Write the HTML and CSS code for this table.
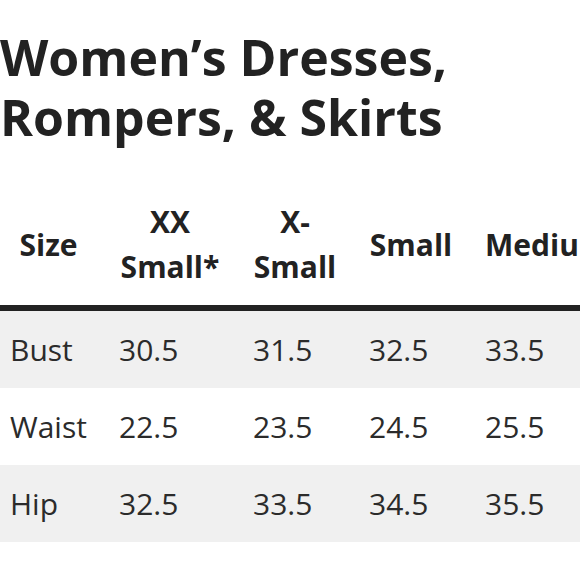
FILE: index.html
```html
<!DOCTYPE html>
<html lang="en">
<head>
<meta charset="utf-8">
<title>Women’s Dresses, Rompers, &amp; Skirts</title>
<link rel="stylesheet" href="styles.css">
</head>
<body>
<main class="page">
  <h1 class="title">Women’s Dresses,<br>Rompers, &amp; Skirts</h1>
  <div class="table-wrap">
    <table class="size-table">
      <colgroup>
        <col class="c-label">
        <col class="c-xxs">
        <col class="c-xs">
        <col class="c-s">
        <col class="c-m">
      </colgroup>
      <thead>
        <tr>
          <th class="first">Size</th>
          <th>XX Small*</th>
          <th>X-Small</th>
          <th>Small</th>
          <th>Medium</th>
        </tr>
      </thead>
      <tbody>
        <tr>
          <td class="first">Bust</td>
          <td>30.5</td>
          <td>31.5</td>
          <td>32.5</td>
          <td>33.5</td>
        </tr>
        <tr>
          <td class="first">Waist</td>
          <td>22.5</td>
          <td>23.5</td>
          <td>24.5</td>
          <td>25.5</td>
        </tr>
        <tr>
          <td class="first">Hip</td>
          <td>32.5</td>
          <td>33.5</td>
          <td>34.5</td>
          <td>35.5</td>
        </tr>
      </tbody>
    </table>
  </div>
</main>
</body>
</html>
```
FILE: styles.css
```css
html, body {
  margin: 0;
  padding: 0;
  background: #ffffff;
}

body {
  font-family: "Open Sans", "Liberation Sans", sans-serif;
  color: #2b2b2b;
}

.page {
  width: 580px;
  height: 580px;
  overflow: hidden;
}

.title {
  margin: 27px 0 0 0;
  font-size: 50px;
  line-height: 60px;
  font-weight: 700;
  color: #222222;
  white-space: nowrap;
}

.table-wrap {
  margin-top: 39px;
  width: 580px;
  overflow: hidden;
}

.size-table {
  border-collapse: collapse;
  table-layout: fixed;
  width: 609px;
  font-size: 30px;
  line-height: 45px;
}

.c-label { width: 103px; }
.c-xxs { width: 134px; }
.c-xs { width: 116px; }
.c-s { width: 116px; }
.c-m { width: 140px; }

.size-table th,
.size-table td {
  box-sizing: border-box;
  padding: 16px 16px;
  vertical-align: middle;
}

.size-table th {
  font-weight: 700;
  color: #222222;
  text-align: center;
  border-bottom: 6px solid #222222;
  padding-top: 13px;
  padding-bottom: 16px;
}

.size-table td {
  font-weight: 400;
  text-align: left;
  white-space: nowrap;
}

.size-table .first {
  padding-left: 10px;
}

.size-table tbody tr:nth-child(odd) {
  background: #f0f0f0;
}
```
